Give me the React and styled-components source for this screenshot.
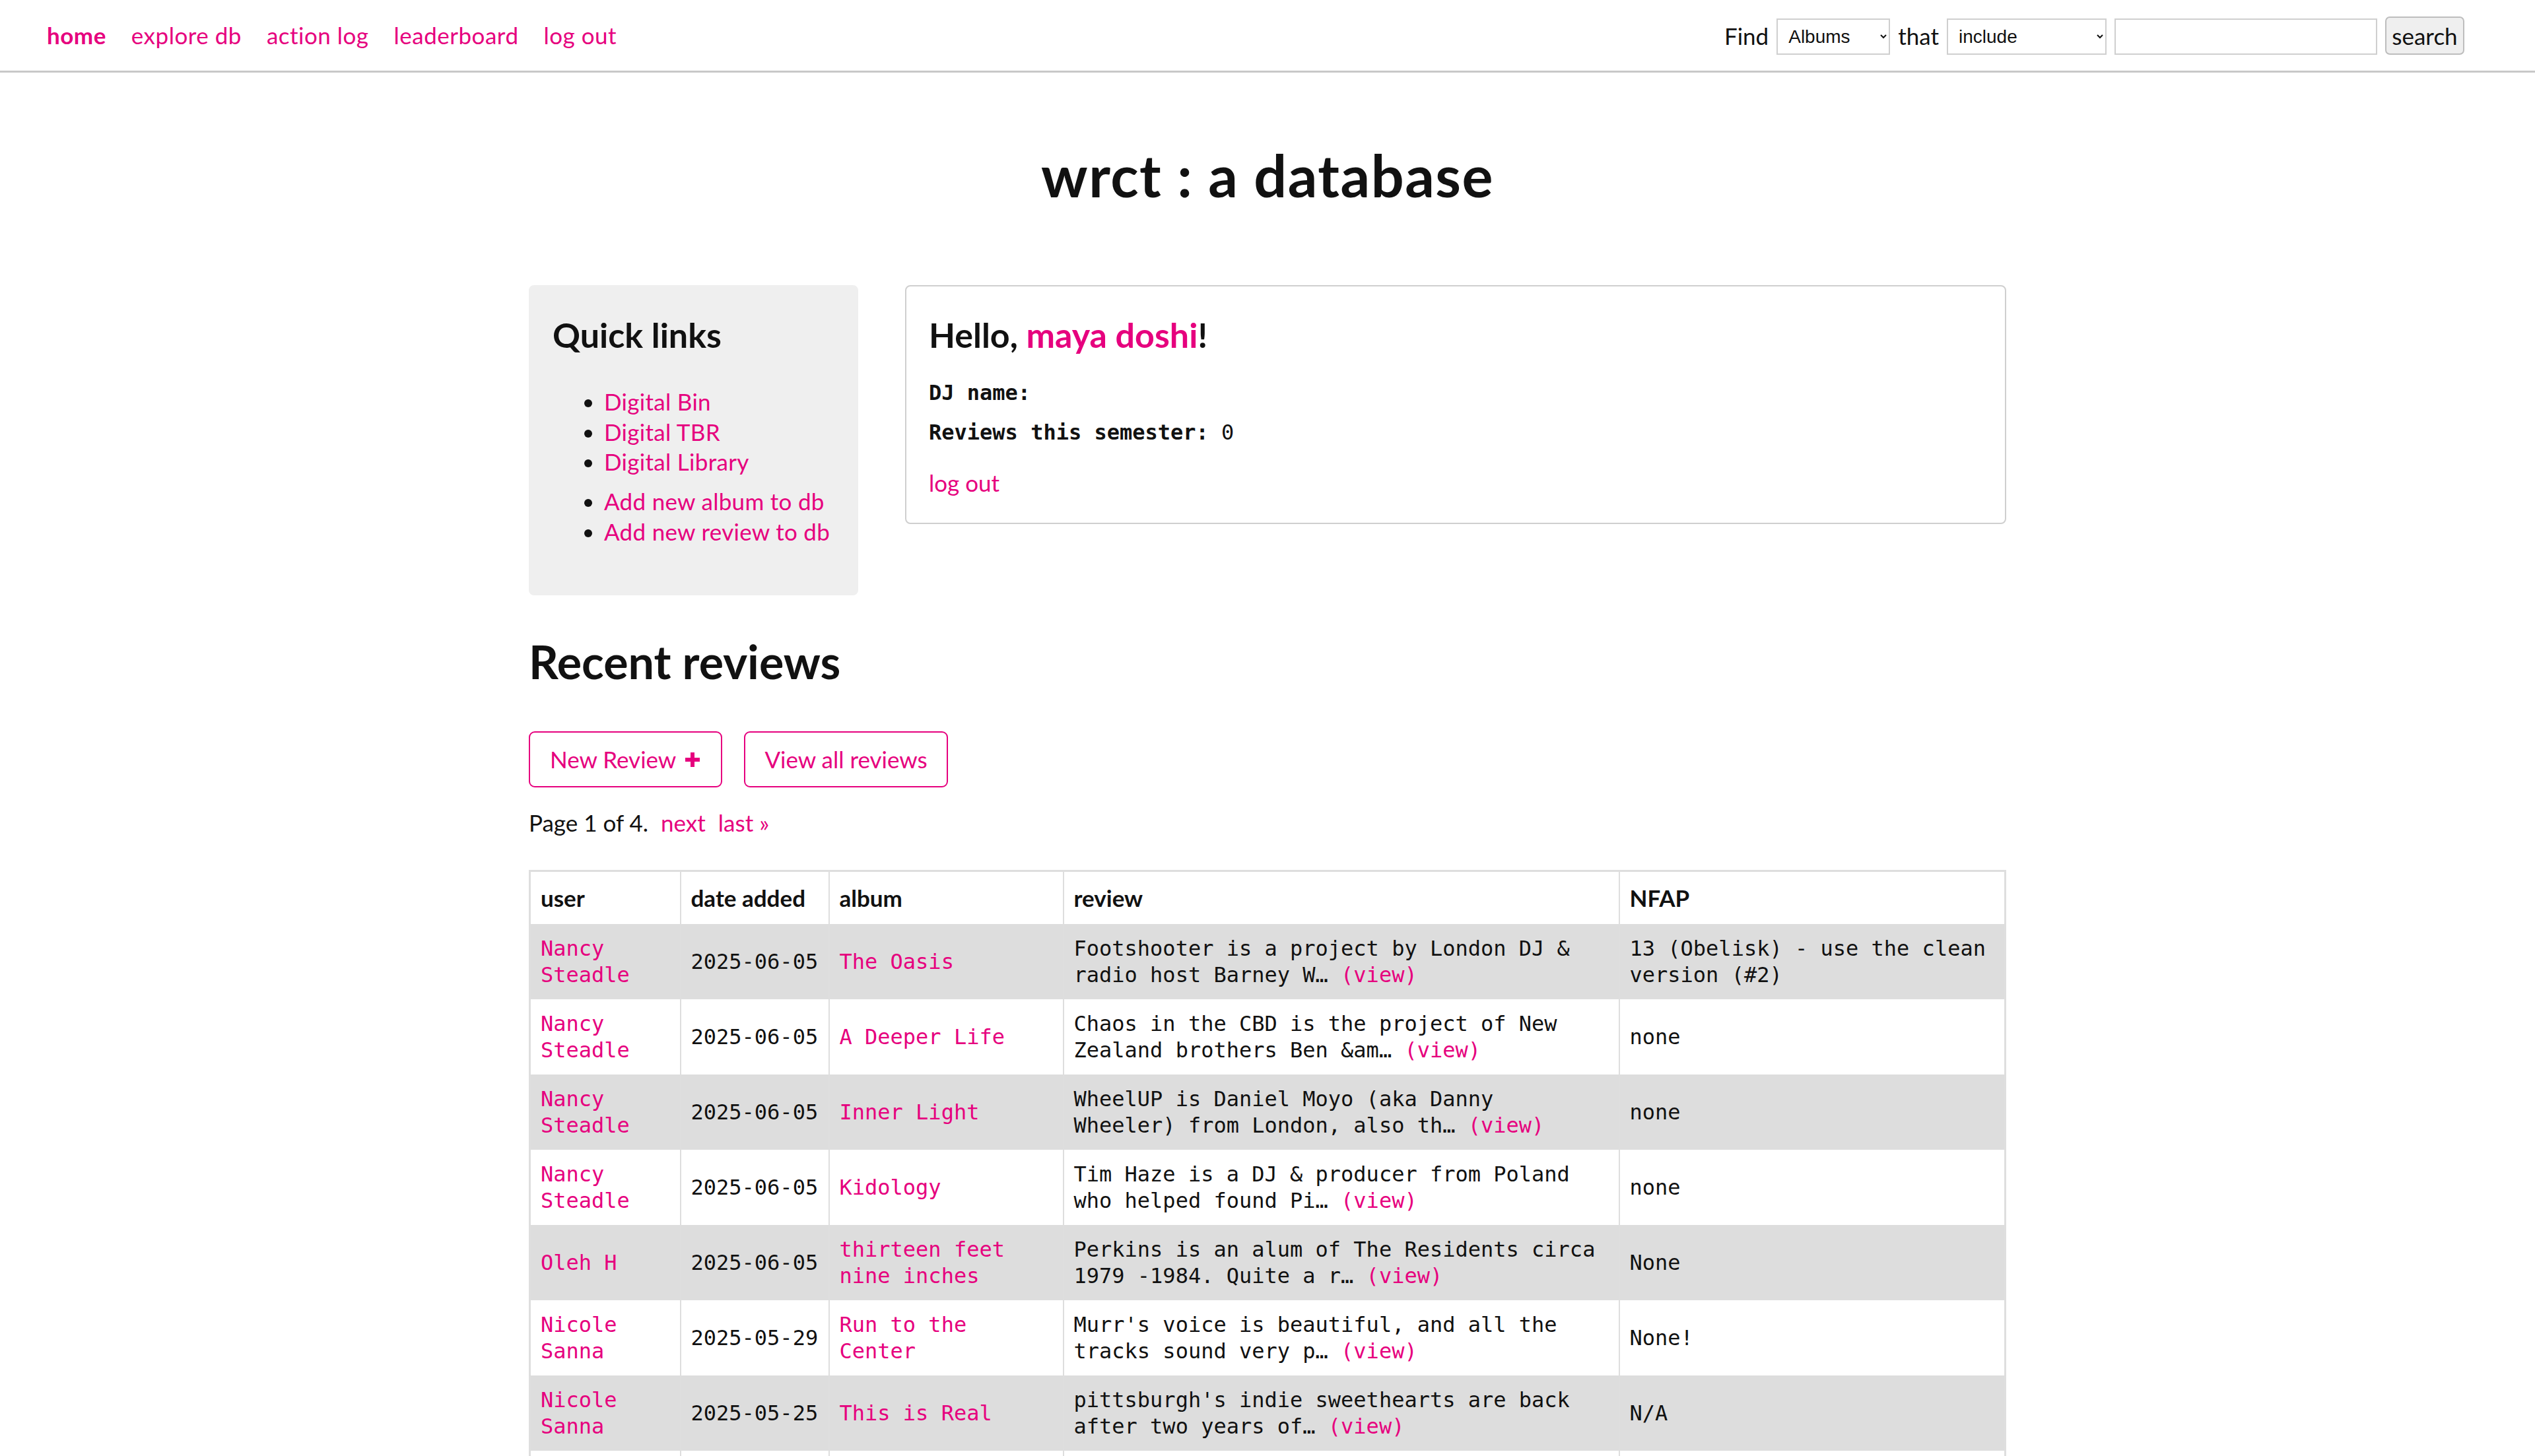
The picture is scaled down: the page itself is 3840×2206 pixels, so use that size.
import React from "react";
import styled, { createGlobalStyle } from "styled-components";

const PINK = "#e6007e";
const SANS = `"Lato", "Noto Sans", sans-serif`;
const MONO = `"DejaVu Sans Mono", "Liberation Mono", monospace`;

const Global = createGlobalStyle`
  html, body { margin: 0; padding: 0; background: #fff; }
  body {
    font-family: ${SANS};
    font-size: 35px;
    line-height: 45.5px;
    color: #111;
  }
  a { color: ${PINK}; text-decoration: none; }
`;

const Nav = styled.nav`
  display: flex;
  align-items: center;
  justify-content: space-between;
  height: 107px;
  border-bottom: 3px solid #c8c8c8;
  padding: 0 107px 0 71px;
`;

const NavLinks = styled.div`
  display: flex;
  gap: 38px;
  letter-spacing: 0.5px;
`;

const NavLink = styled.a`
  font-weight: ${(p) => (p.$active ? 700 : 400)};
`;

const SearchForm = styled.form`
  display: flex;
  align-items: center;
  gap: 12px;
  margin-top: 3px;
`;

const Select = styled.select`
  height: 55px;
  width: ${(p) => p.$w}px;
  border: 2px solid #cfcfcf;
  border-radius: 0;
  background: #fff;
  font-family: "Liberation Sans", Arial, sans-serif;
  font-size: 28px;
  color: #111;
  padding: 0 8px 0 12px;
`;

const SearchInput = styled.input`
  height: 55px;
  width: 398px;
  box-sizing: border-box;
  border: 2px solid #cfcfcf;
  border-radius: 0;
  background: #fff;
  font-size: 28px;
  padding: 0 10px;
`;

const SearchButton = styled.button`
  height: 58px;
  width: 120px;
  box-sizing: border-box;
  background: #efefef;
  border: 2px solid #bdbdbd;
  border-radius: 7px;
  font-family: ${SANS};
  font-size: 35px;
  color: #111;
  padding: 0;
  margin-top: -3px;
`;

const Main = styled.main`
  width: 2238px;
  margin: 0 auto;
`;

const Title = styled.h1`
  margin: 103px 0 0;
  text-align: center;
  font-size: 88px;
  line-height: 105.6px;
  font-weight: 700;
  letter-spacing: 1.5px;
`;

const TopRow = styled.div`
  display: flex;
  align-items: flex-start;
  gap: 71px;
  margin-top: 113px;
`;

const QuickBox = styled.aside`
  width: 499px;
  box-sizing: border-box;
  background: #efefef;
  border-radius: 8px;
  padding: 44.5px 36px 74px;
`;

const BoxHeading = styled.h3`
  margin: 0;
  font-size: 52px;
  line-height: 62.4px;
  font-weight: 700;
`;

const LinkList = styled.ul`
  margin: ${(p) => (p.$first ? "47.6px" : "14.5px")} 0 0;
  padding-left: 78px;
  letter-spacing: 0.3px;
  li { line-height: 45.5px; }
  li::marker { color: #111; }
`;

const Card = styled.section`
  flex: 1;
  border: 2px solid #cfcfcf;
  border-radius: 8px;
  padding: 42.5px 34px 37px;
`;

const InfoLine = styled.p`
  margin: ${(p) => p.$mt}px 0 0;
  font-family: ${MONO};
  font-size: 32px;
  line-height: 40px;
  b { font-weight: 700; }
`;

const CardLink = styled.p`
  margin: 34.7px 0 0;
`;

const SectionTitle = styled.h2`
  margin: 58px 0 0;
  font-size: 70px;
  line-height: 84px;
  font-weight: 700;
`;

const ButtonRow = styled.div`
  display: flex;
  gap: 33px;
  margin-top: 64px;
`;

const OutlineButton = styled.a`
  display: inline-flex;
  align-items: center;
  gap: 14px;
  height: 85px;
  box-sizing: border-box;
  padding: 0 ${(p) => (p.$icon ? 32 : 29)}px 0 ${(p) => (p.$icon ? 30 : 29)}px;
  border: 2px solid ${PINK};
  border-radius: 9px;
  font-size: 35px;
`;

const Pager = styled.p`
  margin: 31px 0 0;
  a { margin-left: 19px; }
`;

const Table = styled.table`
  width: 2238px;
  margin-top: 48px;
  border-collapse: collapse;
  table-layout: fixed;
  border: 3px solid #dedede;
`;

const Th = styled.th`
  text-align: left;
  font-weight: 700;
  font-size: 35px;
  line-height: 45.5px;
  padding: 17px 17px 17px 15px;
  border-left: 2px solid #dedede;
  background: #fff;
`;

const Tr = styled.tr`
  background: ${(p) => (p.$alt ? "#dddddd" : "#ffffff")};
`;

const Td = styled.td`
  font-family: ${MONO};
  font-size: 32px;
  line-height: 40px;
  padding: 17px 17px 17px 15px;
  vertical-align: middle;
  border-left: 2px solid #dedede;
  white-space: ${(p) => (p.$nowrap ? "nowrap" : "normal")};
  overflow-wrap: break-word;
`;

const PlusIcon = () => (
  <svg width="22" height="22" viewBox="0 0 22 22" aria-hidden="true">
    <rect x="8" y="0" width="6" height="22" fill={PINK} />
    <rect x="0" y="8" width="22" height="6" fill={PINK} />
  </svg>
);

const rows = [
  ["Nancy Steadle", "2025-06-05", "The Oasis", "Footshooter is a project by London DJ & radio host Barney W…", "13 (Obelisk) - use the clean version (#2)"],
  ["Nancy Steadle", "2025-06-05", "A Deeper Life", "Chaos in the CBD is the project of New Zealand brothers Ben &am…", "none"],
  ["Nancy Steadle", "2025-06-05", "Inner Light", "WheelUP is Daniel Moyo (aka Danny Wheeler) from London, also th…", "none"],
  ["Nancy Steadle", "2025-06-05", "Kidology", "Tim Haze is a DJ & producer from Poland who helped found Pi…", "none"],
  ["Oleh H", "2025-06-05", "thirteen feet nine inches", "Perkins is an alum of The Residents circa 1979 -1984. Quite a r…", "None"],
  ["Nicole Sanna", "2025-05-29", "Run to the Center", "Murr's voice is beautiful, and all the tracks sound very p…", "None!"],
  ["Nicole Sanna", "2025-05-25", "This is Real", "pittsburgh's indie sweethearts are back after two years of…", "N/A"],
  ["Nicole Sanna", "2025-05-25", "Forever", "a warm and hazy record full of gentle loops and soft…", "none"],
];

export default function App() {
  return (
    <>
      <Global />
      <Nav>
        <NavLinks>
          <NavLink href="#" $active>home</NavLink>
          <NavLink href="#">explore db</NavLink>
          <NavLink href="#">action log</NavLink>
          <NavLink href="#">leaderboard</NavLink>
          <NavLink href="#">log out</NavLink>
        </NavLinks>
        <SearchForm onSubmit={(e) => e.preventDefault()}>
          <span>Find</span>
          <Select $w={172} defaultValue="Albums">
            <option>Albums</option>
            <option>Artists</option>
            <option>Reviews</option>
          </Select>
          <span>that</span>
          <Select $w={242} defaultValue="include">
            <option>include</option>
            <option>start with</option>
            <option>match exactly</option>
          </Select>
          <SearchInput type="text" />
          <SearchButton type="submit">search</SearchButton>
        </SearchForm>
      </Nav>
      <Main>
        <Title>wrct : a database</Title>
        <TopRow>
          <QuickBox>
            <BoxHeading>Quick links</BoxHeading>
            <LinkList $first>
              <li><a href="#">Digital Bin</a></li>
              <li><a href="#">Digital TBR</a></li>
              <li><a href="#">Digital Library</a></li>
            </LinkList>
            <LinkList>
              <li><a href="#">Add new album to db</a></li>
              <li><a href="#">Add new review to db</a></li>
            </LinkList>
          </QuickBox>
          <Card>
            <BoxHeading>
              Hello, <a href="#">maya doshi</a>!
            </BoxHeading>
            <InfoLine $mt={36}><b>DJ name:</b></InfoLine>
            <InfoLine $mt={20}><b>Reviews this semester:</b> 0</InfoLine>
            <CardLink><a href="#">log out</a></CardLink>
          </Card>
        </TopRow>
        <SectionTitle>Recent reviews</SectionTitle>
        <ButtonRow>
          <OutlineButton href="#" $icon>New Review <PlusIcon /></OutlineButton>
          <OutlineButton href="#">View all reviews</OutlineButton>
        </ButtonRow>
        <Pager>
          Page 1 of 4.<a href="#">next</a><a href="#">last »</a>
        </Pager>
        <Table>
          <colgroup>
            <col style={{ width: 228 }} />
            <col style={{ width: 225 }} />
            <col style={{ width: 355 }} />
            <col style={{ width: 842 }} />
            <col />
          </colgroup>
          <thead>
            <tr>
              <Th>user</Th>
              <Th>date added</Th>
              <Th>album</Th>
              <Th>review</Th>
              <Th>NFAP</Th>
            </tr>
          </thead>
          <tbody>
            {rows.map((r, i) => (
              <Tr key={i} $alt={i % 2 === 0}>
                <Td><a href="#">{r[0]}</a></Td>
                <Td $nowrap>{r[1]}</Td>
                <Td><a href="#">{r[2]}</a></Td>
                <Td>{r[3]} <a href="#">(view)</a></Td>
                <Td>{r[4]}</Td>
              </Tr>
            ))}
          </tbody>
        </Table>
      </Main>
    </>
  );
}
